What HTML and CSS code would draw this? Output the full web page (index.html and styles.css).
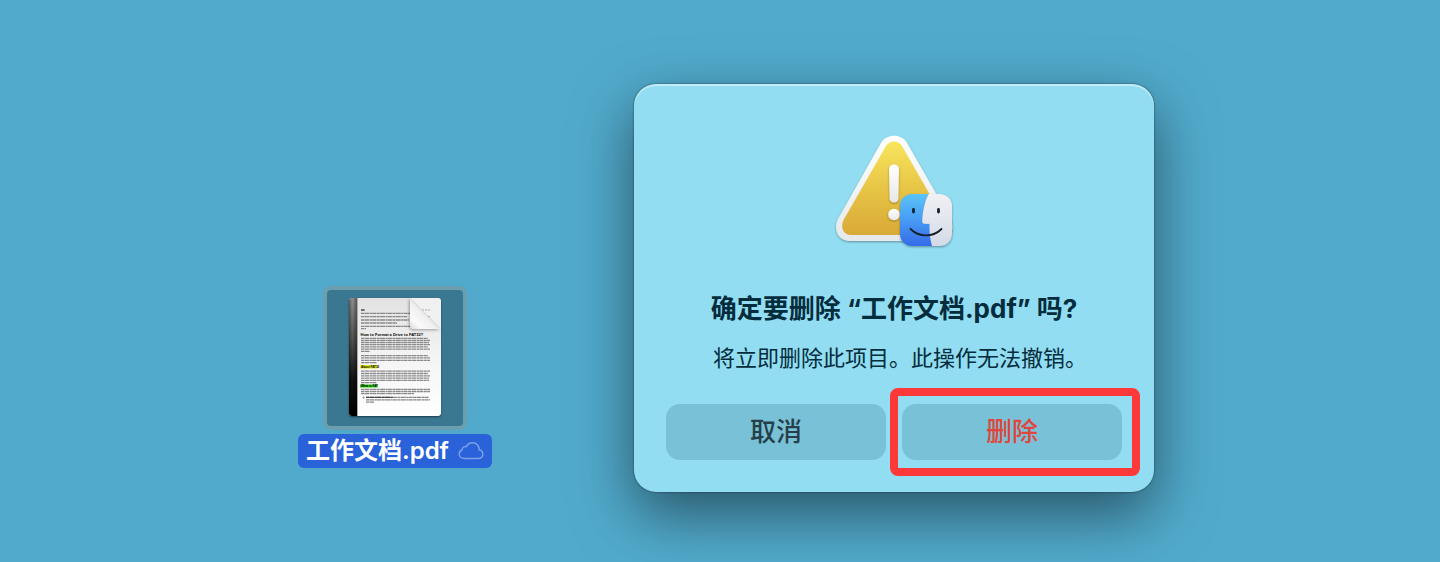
FILE: index.html
```html
<!DOCTYPE html>
<html lang="zh-CN">
<head>
    <meta charset="UTF-8">
    <meta name="viewport" content="width=device-width, initial-scale=1.0">
    <title>删除文件</title>
    <link rel="stylesheet" href="styles.css">
</head>
<body>
    <main class="desktop">
        <!-- 桌面文件 -->
        <div class="file">
            <div class="file-thumb">
                <svg class="file-page" width="92" height="118" viewBox="0 0 92 118" aria-hidden="true">
                    <defs>
                        <linearGradient id="paper" x1="0" y1="0" x2="0" y2="1">
                            <stop offset="0" stop-color="#e2e2e2"/>
                            <stop offset="0.5" stop-color="#f4f4f4"/>
                            <stop offset="1" stop-color="#fff"/>
                        </linearGradient>
                        <linearGradient id="spine" x1="0" y1="0" x2="0" y2="1">
                            <stop offset="0" stop-color="#929292"/>
                            <stop offset="0.4" stop-color="#4a4a4a"/>
                            <stop offset="0.7" stop-color="#111"/>
                            <stop offset="1" stop-color="#000"/>
                        </linearGradient>
                        <linearGradient id="spine-edge">
                            <stop offset="0" stop-color="#000" stop-opacity="0.4"/>
                            <stop offset="0.4" stop-color="#000" stop-opacity="0"/>
                            <stop offset="1" stop-color="#000" stop-opacity="0.4"/>
                        </linearGradient>
                        <linearGradient id="fold" gradientUnits="userSpaceOnUse" x1="61" y1="30" x2="77" y2="14">
                            <stop offset="0" stop-color="#dcdcdc"/>
                            <stop offset="0.35" stop-color="#fafafa"/>
                            <stop offset="0.8" stop-color="#f0f0f0"/>
                            <stop offset="1" stop-color="#dedede"/>
                        </linearGradient>
                        <filter id="fold-shadow" x="-30%" y="-30%" width="160%" height="160%">
                            <feDropShadow dx="-1" dy="1" stdDeviation="1.5" flood-opacity="0.35"/>
                        </filter>
                        <clipPath id="page-clip"><rect width="92" height="118" rx="2.5"/></clipPath>
                    </defs>
                    <g clip-path="url(#page-clip)">
                        <rect width="92" height="118" fill="url(#paper)"/>
                        <rect width="8" height="118" fill="url(#spine)"/>
                        <rect width="8" height="118" fill="url(#spine-edge)"/>
                        <rect x="8" width="1" height="118" fill="#aaa"/>
                        <rect x="11" y="67" width="17.500" height="3.500" fill="#e6e81c"/>
                        <rect x="11" y="86.500" width="17.500" height="3" fill="#2fd012"/>
                        <g class="print">
                            <path class="print-dark" d="M12 12h4"/>
                            <path d="M12 15.400h49M12 18.700h46M12 22h48M12 25h36M12 28.300h57M12 30.600h5"/>
                            <path d="M12 40.300h67M12 42.400h69M12 44.500h68M12 46.700h69M12 48.900h67M12 51.100h69M12 53.300h9"/>
                            <path d="M12 57.600h67M12 59.900h69M12 62.300h69M12 64.600h16"/>
                            <path d="M12 73.200h69M12 75.500h67M12 77.800h69M12 80.100h68M12 82.400h68M12 84.600h16"/>
                            <path d="M12 91.300h69M12 93.500h69M12 95.700h53"/>
                            <path d="M17 99.400h63M17 101.800h64M17 104.200h8"/>
                            <path class="print-dark" d="M17 99.400h27"/>
                            <circle cx="14.500" cy="99.500" r="0.400"/>
                        </g>
                        <text class="print-title" x="11.500" y="37.500">How to Format a Drive to FAT32?</text>
                        <text class="print-sub" x="12" y="69.700">About FAT32</text>
                        <text class="print-sub" x="12" y="89">What is FAT</text>
                        <path d="M61 0 V27 Q61 31 65 31 L92 31 Q89 30 87 27 L65 3 Q63 1 61 0Z" fill="url(#fold)" filter="url(#fold-shadow)"/>
                        <path d="M61 0 H92 V31 L63 2Z" fill="#f0f0f0"/>
                        <path d="M73 12h8M79 18.500h3" class="print-faint"/>
                        <path d="M62 1L91 30.500" stroke="#ccc" stroke-width="0.600" fill="none"/>
                    </g>
                </svg>
            </div>
            <div class="file-name">
                <span>工作文档.pdf</span>
                <svg class="cloud" width="26" height="20" viewBox="0 0 26 20" aria-hidden="true">
                    <path d="M6.500 17.500 H20 C23 17.500 24.800 15.600 24.800 13.200 C24.800 11 23.300 9.400 21.200 9.100 C21.300 4.800 18.400 1.700 14.600 1.700 C11.600 1.700 9.400 3.200 8.300 5.700 C6 5.100 4.100 6.700 4 9 C2.200 9.600 1.200 11.100 1.200 13 C1.200 15.600 3.400 17.500 6.500 17.500Z"/>
                </svg>
            </div>
        </div>

        <!-- 删除确认对话框 -->
        <section class="dialog" role="alertdialog" aria-labelledby="dialog-title" aria-describedby="dialog-text">
            <svg class="dialog-icon" width="128" height="128" viewBox="0 0 128 128" aria-hidden="true">
                <defs>
                    <linearGradient id="warn" x1="0" y1="0" x2="0" y2="1">
                        <stop offset="0" stop-color="#f9e55c"/>
                        <stop offset="0.5" stop-color="#e7c546"/>
                        <stop offset="1" stop-color="#d9a936"/>
                    </linearGradient>
                    <linearGradient id="rim" x1="0" y1="0" x2="0" y2="1">
                        <stop offset="0" stop-color="#fff"/>
                        <stop offset="1" stop-color="#e6e8ea"/>
                    </linearGradient>
                    <linearGradient id="face-blue" x1="0" y1="0" x2="0" y2="1">
                        <stop offset="0" stop-color="#5ac4f8"/>
                        <stop offset="0.5" stop-color="#489bf4"/>
                        <stop offset="1" stop-color="#346be8"/>
                    </linearGradient>
                    <linearGradient id="face-white" x1="0" y1="0" x2="0" y2="1">
                        <stop offset="0" stop-color="#f1f1f4"/>
                        <stop offset="1" stop-color="#d3dae6"/>
                    </linearGradient>
                    <clipPath id="face-clip"><rect x="70" y="64" width="52" height="52" rx="12"/></clipPath>
                    <filter id="soft" x="-20%" y="-20%" width="140%" height="140%">
                        <feDropShadow dx="0" dy="1" stdDeviation="1" flood-opacity="0.35"/>
                    </filter>
                </defs>
                <path d="M51.500 12 C57 3.500 71 3.500 76.500 12 L120 88 C126 99 120 111 108 111 H20 C8 111 3 99 8 89Z" fill="url(#rim)" filter="url(#soft)"/>
                <path d="M56 16 C59.500 10 68.500 10 72 16 L114.500 90 C118 97 114 105 106 105 H21 C13.500 105 10 98 13.500 90Z" fill="url(#warn)"/>
                <g fill="url(#rim)" filter="url(#soft)">
                    <path d="M59 39 C59 33 69 33 69 39 L68.300 69 C68 73.500 60 73.500 59.700 69Z"/>
                    <circle cx="64" cy="84.500" r="5.800"/>
                </g>
                <g filter="url(#soft)">
                    <rect x="70" y="64" width="52" height="52" rx="12" fill="url(#face-blue)"/>
                    <g clip-path="url(#face-clip)">
                        <path d="M98.500 64 C94.500 71 92.500 81 92 91 C92 93 93 94 95 94 H99.500 C99.300 102 100 109 102 116 H123 V64Z" fill="url(#face-white)"/>
                        <path d="M98.500 64 C94.500 71 92.500 81 92 91 C92 93 93 94 95 94 H99.500" fill="none" stroke="#3b69a8" stroke-opacity="0.350" stroke-width="0.600"/>
                    </g>
                </g>
                <g fill="none" stroke="#15202b" stroke-linecap="round">
                    <path d="M83.500 79.500v2.600M108.500 79.500v2.600" stroke-width="2.800"/>
                    <path d="M80.500 99 C89 107.500 103 107.500 111.500 99" stroke-width="1.800"/>
                </g>
            </svg>
            <h1 class="dialog-title" id="dialog-title">确定要删除 “工作文档.pdf” 吗?</h1>
            <p class="dialog-text" id="dialog-text">将立即删除此项目。此操作无法撤销。</p>
            <div class="dialog-actions">
                <button type="button" class="btn">取消</button>
                <div class="marked">
                    <button type="button" class="btn btn-delete">删除</button>
                </div>
            </div>
        </section>
    </main>
</body>
</html>
```

FILE: styles.css
```css
body {
    margin: 0;
    background-color: #51aacc;
    font-family: Inter, "Liberation Sans", "Noto Sans CJK SC", sans-serif;
}
.desktop {
    position: relative;
    min-height: 100vh;
    overflow: hidden;
}

/* 桌面文件 */
.file {
    position: absolute;
    left: 298px;
    top: 286px;
    display: flex;
    flex-direction: column;
    align-items: center;
    gap: 4px;
}
.file-thumb {
    display: flex;
    padding: 8px 22px 10px;
    border: 4px solid #6b9eaf;
    border-radius: 8px;
    background: #3a7891;
}
.file-page {
    border-radius: 3px;
    box-shadow: 0 1px 2px rgba(0, 0, 0, 0.5);
}
.print {
    fill: none;
    stroke: #888;
    stroke-width: 1.3;
    stroke-dasharray: 3 0.4 5 0.5 2 0.3 4 0.5;
}
.print-dark {
    stroke: #444;
}
.print-faint {
    stroke: #aaa;
    stroke-width: 1;
    stroke-dasharray: 2 1;
}
.print-title {
    font: bold 4px "Liberation Sans", sans-serif;
}
.print-sub {
    font: bold 3px "Liberation Sans", sans-serif;
}
.file-name {
    display: flex;
    align-items: center;
    gap: 9px;
    padding: 0 8px;
    border-radius: 6px;
    background: #2962d9;
    color: #fff;
    font-size: 24px;
    font-weight: 600;
    line-height: 34px;
    white-space: nowrap;
}
.cloud {
    fill: none;
    stroke: #7c9fe8;
    stroke-width: 1.5;
}

/* 对话框 */
.dialog {
    position: absolute;
    left: 634px;
    top: 84px;
    box-sizing: border-box;
    width: 520px;
    padding: 46px 32px 32px;
    border-radius: 22px;
    background: #92ddf1;
    box-shadow: inset 0 2px 1px rgba(255, 255, 255, 0.45),
        0 0 2px rgba(0, 0, 0, 0.65),
        0 22px 60px rgba(0, 0, 0, 0.5);
    text-align: center;
}
.dialog-icon {
    display: block;
    margin: 0 auto;
}
.dialog-title {
    margin: 34px 0 0;
    color: #032c3c;
    font-size: 26px;
    font-weight: 700;
    line-height: 34px;
    white-space: nowrap;
}
.dialog-text {
    margin: 18px 0 0;
    padding-left: 12px;
    color: #032c3c;
    font-size: 22px;
    line-height: 28px;
    white-space: nowrap;
}
.dialog-actions {
    display: flex;
    gap: 16px;
    margin-top: 32px;
}
.dialog-actions > * {
    flex: 1;
}
.btn {
    width: 100%;
    height: 56px;
    padding: 0 0 6px;
    border: none;
    border-radius: 14px;
    background: #78c1d7;
    color: #263f49;
    font-family: inherit;
    font-size: 26px;
    font-weight: 500;
    cursor: pointer;
}
.btn-delete {
    color: #e0463b;
}
.marked {
    position: relative;
}
/* 红色标注框 */
.marked::after {
    content: "";
    position: absolute;
    inset: -16px -18px -16px -12px;
    border: 8px solid #fc3838;
    border-radius: 8px;
    pointer-events: none;
}
```
